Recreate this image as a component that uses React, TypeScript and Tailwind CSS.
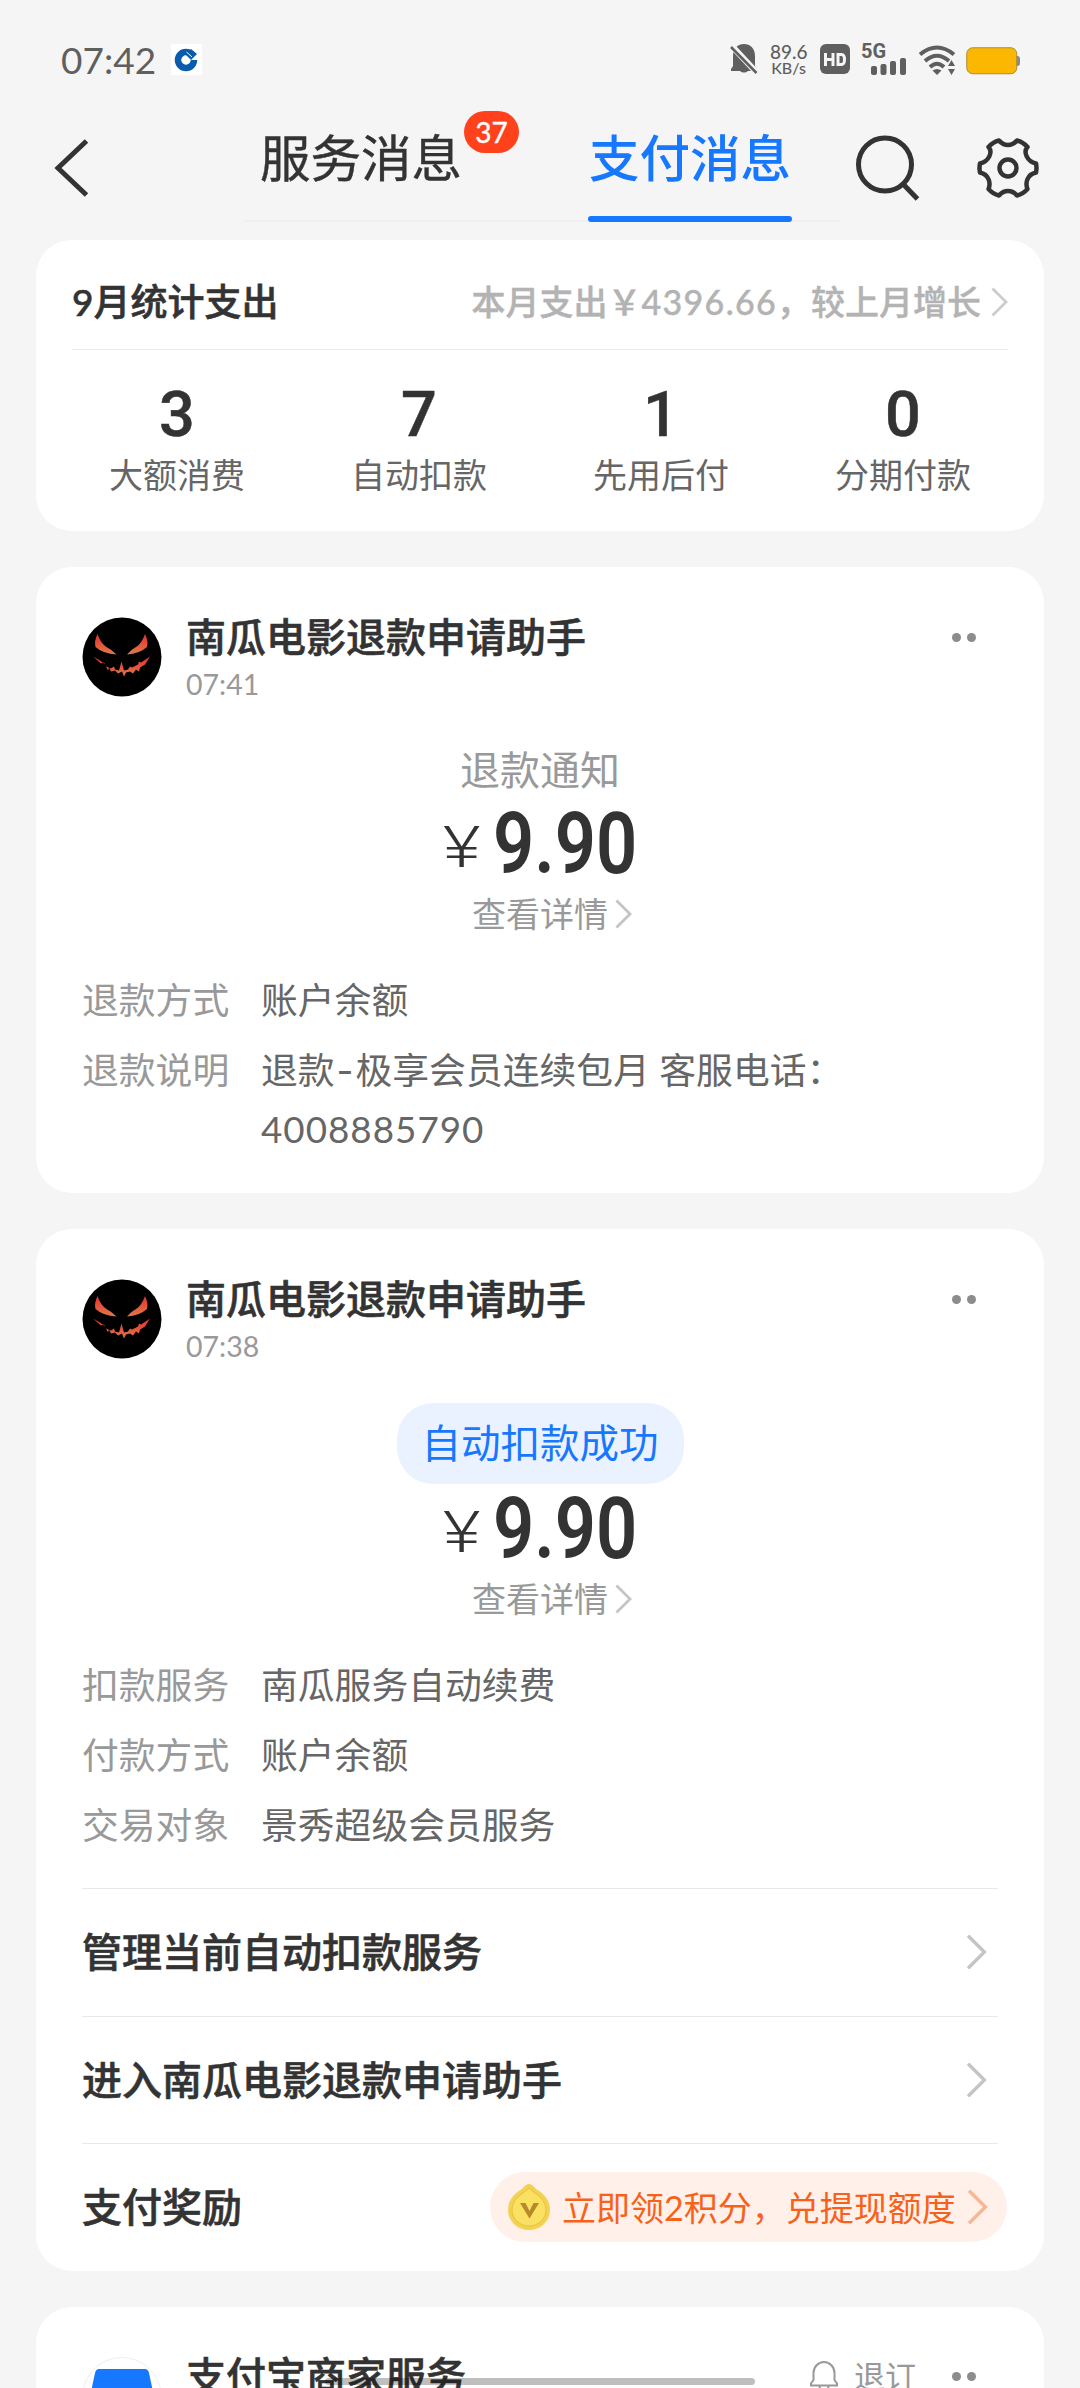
import type { ReactNode } from "react";

const stats = [
  { value: "3", label: "大额消费" },
  { value: "7", label: "自动扣款" },
  { value: "1", label: "先用后付" },
  { value: "0", label: "分期付款" },
];

const refundRows = [
  { label: "退款方式", value: "账户余额" },
  {
    label: "退款说明",
    value: (
      <>
        退款<span className="mx-[2px] font-[Inter]">-</span>极享会员连续包月 客服电话：
        <span className="tracking-[1px]">4008885790</span>
      </>
    ),
  },
];

const deductRows = [
  { label: "扣款服务", value: "南瓜服务自动续费" },
  { label: "付款方式", value: "账户余额" },
  { label: "交易对象", value: "景秀超级会员服务" },
];

function Chevron({ className }: { className: string }) {
  return (
    <svg viewBox="0 0 18 32" fill="none" stroke="currentColor" strokeWidth="3" className={className}>
      <path d="M1.5 1.5 16 16 1.5 30.5" />
    </svg>
  );
}

function StatusBar() {
  return (
    <div className="flex h-[80px] items-start pl-[61px] pr-[60px] pt-[44px] text-[#5f5f5f]">
      <span className="text-[37px] leading-[31px]">07:42</span>
      <svg viewBox="0 0 31 31" className="ml-[15px] h-[31px] w-[31px]">
        <rect width="31" height="31" fill="#fff" />
        <circle cx="15" cy="16" r="8" fill="none" stroke="#0a5bab" strokeWidth="6.5" />
        <path d="M15 16 31 5v11Z" fill="#fff" />
        <path d="m15 11 5-6 6 5-6 6Z" fill="#0a5bab" />
        <path d="m15.5 8 5.5 5" stroke="#fff" strokeWidth="1" />
        <path d="m15 11.5 4.5 4.5-4.500 4.500-4.500-4.500Z" fill="#fff" />
      </svg>

      <div className="ml-auto flex items-start">
        <svg viewBox="0 0 28 31" className="h-[31px] w-[28px]">
          <path
            d="M3 22V12C3 4 8 0 14 0s11 4 11 12v10l2 3v2H18a5 4 0 0 1-8 0H1v-2Z"
            fill="currentColor"
          />
          <path d="M0 0 28 30" stroke="#f5f5f5" strokeWidth="6" />
          <path d="M1 3 26.500 29" stroke="currentColor" strokeWidth="2.500" />
        </svg>
        <div className="ml-[12px] w-[37px] text-center font-medium">
          <div className="text-[19px] leading-[15px]">89.6</div>
          <div className="text-[16px] leading-[17px]">KB/s</div>
        </div>
        <svg viewBox="0 0 30 30" className="ml-[13px] h-[30px] w-[30px]">
          <rect width="30" height="30" rx="6" fill="currentColor" />
          <path d="M5.500 9v13M13 9v13M5.500 15.500H13M18 10.500h3.500q3 0 3 5t-3 5H18Z" fill="none" stroke="#f5f5f5" strokeWidth="3" />
        </svg>
        <div className="ml-[11px] h-[31px] w-[45px]">
          <div className="font-[Roboto] text-[20px] font-bold leading-[15px]">5G</div>
          <svg viewBox="0 0 36 17" className="-mt-[1px] ml-[10px] h-[17px] w-[36px]">
            <g fill="currentColor">
              <rect x="0" y="8" width="6" height="9" rx="2" />
              <rect x="9.500" y="6" width="6" height="11" rx="2" />
              <rect x="19" y="3" width="6" height="14" rx="2" />
              <rect x="29" y="0" width="6" height="17" rx="2" />
            </g>
          </svg>
        </div>
        <svg viewBox="0 0 37 30" className="ml-[13px] mt-[1px] h-[30px] w-[37px]">
          <g fill="none" stroke="currentColor" strokeWidth="4">
            <path d="M1 9.500Q18 -4.500 35 9.500" />
            <path d="M6 16Q18 5.500 30 16" />
            <path d="M11 22Q18 15.500 25 22" />
          </g>
          <path d="M13.500 25.500q4.500-3 9 0L18 30Z" fill="currentColor" />
          <path d="m32.500 15 3.500 6h-7ZM32.500 30l3.500-6h-7Z" fill="currentColor" />
        </svg>
        <svg viewBox="0 0 54 28" className="ml-[10px] mt-[3px] h-[28px] w-[54px]">
          <path d="M50 9h1.500q2.500 0 2.500 3v4q0 3-2.500 3H50Z" fill="#8a8a8a" />
          <rect x=".75" y=".75" width="50" height="26" rx="6" fill="#fcb800" stroke="#a98c3a" strokeWidth="1" />
        </svg>
      </div>
    </div>
  );
}

function Header() {
  return (
    <header className="flex h-[160px] items-start text-[#333]">
      <svg viewBox="0 0 36 58" className="ml-[53px] mt-[59px] h-[58px] w-[36px] shrink-0">
        <path d="M33.500 2 5 29l28.500 27" fill="none" stroke="currentColor" strokeWidth="5" />
      </svg>
      <nav className="ml-[155px] flex h-[142px] w-[596px] border-b-2 border-[#f0f0f0] pl-[14px] text-[50.500px] leading-[60px]">
        <div className="relative h-[142px] w-[206px] pt-[48px] text-center [-webkit-text-stroke:0.4px]">
          服务消息
          <span className="absolute left-[206px] top-[31px] flex h-[42px] w-[55px] items-center justify-center rounded-full bg-[#ff411c] text-[28px] text-white">
            37
          </span>
        </div>
        <div className="relative ml-[124px] h-[142px] w-[204px] pt-[48px] text-center font-medium text-[#1677ff]">
          支付消息
          <span className="absolute bottom-0 left-0 h-[6px] w-full rounded-full bg-[#1677ff]" />
        </div>
      </nav>
      <svg viewBox="0 0 66 68" className="ml-[14px] mt-[53px] h-[68px] w-[66px] shrink-0">
        <g fill="none" stroke="currentColor" strokeWidth="5">
          <circle cx="31" cy="31.500" r="26.500" />
          <path d="m50 52 13.500 14" />
        </g>
      </svg>
      <svg viewBox="0 0 62 64" className="ml-[57px] mt-[56px] h-[64px] w-[62px] shrink-0">
        <g fill="none" stroke="currentColor" strokeWidth="4.500" strokeLinejoin="round">
          <path d="M22 4.500C27 10.500 35 10.500 40 4.500Q46 6 50.500 11C46 16 50 25.500 59 27.500Q60 32 59 36.500C50 38.500 48 47 50.500 53Q46 58 40 59.500C35 53.500 27 53.500 22 59.500Q16 58 11.500 53C14 47 12 38.500 3 36.500Q2 32 3 27.500C12 25.500 16 16 11.500 11Q16 6 22 4.500Z" />
          <circle cx="31" cy="32" r="8.500" />
        </g>
      </svg>
    </header>
  );
}

function PumpkinAvatar() {
  return (
    <svg viewBox="0 0 80 80" className="-mt-px h-[80px] w-[80px] shrink-0">
      <defs>
        <linearGradient id="ember" x1="0" y1="0" x2="0" y2="1">
          <stop offset="0" stopColor="#e62e2c" />
          <stop offset="1" stopColor="#e07a48" />
        </linearGradient>
      </defs>
      <circle cx="40" cy="40" r="39.500" fill="#000" />
      <g fill="url(#ember)">
        <path d="M15.500 17Q12 24 13.500 30q8 7 21 7.500-5-5-10-7.500-6-4-9-13Z" />
        <path d="M63 17q3.500 7 2 13-8 7-20 7.500 4-5 9-7.500 6-4 9-13Z" />
        <path d="m11 39.500 8 7 3-1 2 4 5 2 3-2 1 3 4 1 2.500-9 2.500 9 4-1 2-3 2 1 6-3 1-3 2 1 9-6-5 8-5 3-1 4-3-2-3 4-3-2-4 1-2 4-2-5-4 2-3-3-4 1-2-4-1 3-3-6-5-4Z" />
      </g>
    </svg>
  );
}

function MerchantAvatar() {
  return (
    <svg viewBox="0 0 80 80" className="h-[80px] w-[80px] shrink-0">
      <circle cx="40" cy="40" r="39.500" fill="#fff" stroke="#eee" />
      <path d="M17 12h46q3 0 4 4l3 14q0 6-6 6H16q-6 0-6-6l3-14q1-4 4-4Z" fill="#1677ff" />
      <path d="M22 34q3-3 6 0t6 0 6 0 6 0 6 0 6 0" fill="none" stroke="#fff" strokeWidth="2" />
    </svg>
  );
}

function CardHeader({ avatar, title, time, action }: { avatar: ReactNode; title: string; time: string; action?: ReactNode }) {
  return (
    <div className="flex h-[80px] items-start">
      {avatar}
      <div className="ml-[24px]">
        <h2 className="text-[40px] font-medium leading-[38px] text-[#333] [-webkit-text-stroke:0.6px]">{title}</h2>
        <div className="mt-[12px] text-[28.500px] leading-[32px] text-[#999]">{time}</div>
      </div>
      <div className="ml-auto mr-[22px] flex h-[38px] items-center text-[#999]">
        {action}
        <span className="flex gap-[6px]">
          <i className="h-[9px] w-[9px] rounded-full bg-[#8c8c8c]" />
          <i className="h-[9px] w-[9px] rounded-full bg-[#8c8c8c]" />
        </span>
      </div>
    </div>
  );
}

function Amount() {
  return (
    <div className="flex h-[68px] items-center justify-center pt-[3px] leading-[68px] text-[#333]">
      <span className="mt-[6px] w-[50px] origin-left scale-x-[1.25] font-[Roboto] text-[58px] font-light">¥</span>
      <span className="w-[144px] origin-left scale-x-[0.84] whitespace-nowrap font-[Roboto] text-[86px] font-semibold">
        9.90
      </span>
    </div>
  );
}

function DetailLink() {
  return (
    <div className="mt-[18px] flex h-[40px] items-center justify-center pl-[24px] text-[34px] leading-[40px] text-[#999]">
      查看详情
      <Chevron className="ml-[7px] h-[30px] w-[17px] text-[#c4c4c4]" />
    </div>
  );
}

function InfoRows({ rows }: { rows: { label: string; value: ReactNode }[] }) {
  return (
    <dl className="mt-[37px] flex flex-col gap-[11px] text-[36.800px] leading-[59px]">
      {rows.map((row) => (
        <div key={row.label} className="flex">
          <dt className="w-[179px] shrink-0 text-[#999]">{row.label}</dt>
          <dd className="w-[620px] text-[#666]">{row.value}</dd>
        </div>
      ))}
    </dl>
  );
}

function ActionRow({ title, children }: { title: string; children: ReactNode }) {
  return (
    <div className="flex h-[127.500px] items-center justify-between border-t border-[#e8e8e8] text-[40px] font-medium text-[#333]">
      <span className="[-webkit-text-stroke:0.6px]">{title}</span>
      {children}
    </div>
  );
}

function Coin() {
  return (
    <svg viewBox="0 0 42 46" className="h-[46px] w-[42px]">
      <path d="M21 0q3 0 7 5 14 8 14 21a21 20 0 0 1-42 0Q0 13 14 5q4-5 7-5Z" fill="#f3d250" />
      <path d="M21 4q3 3 6 5 11 7 11 17a17 16 0 0 1-34 0Q4 16 15 9q3-2 6-5Z" fill="#fbe162" stroke="#e9c043" strokeWidth="1" />
      <path d="M12 19h5.500l4 8 4-8H31l-9.500 15.500Z" fill="#b8892a" />
    </svg>
  );
}

export default function App() {
  return (
    <div className="relative h-[2388px] w-[1080px] overflow-hidden bg-[#f5f5f5] font-[Lato,'Noto_Sans_CJK_SC',sans-serif]">
      <StatusBar />
      <Header />

      <main className="flex flex-col gap-[36px] px-[36px]">
        <section className="h-[291px] rounded-[36px] bg-white px-[20px]">
          <div className="mx-[16px] flex h-[110px] items-center border-b border-[#ebebeb] pt-[14px]">
            <h2 className="text-[37px] font-medium text-[#333] [-webkit-text-stroke:0.6px]">9月统计支出</h2>
            <span className="ml-auto text-[34px] font-medium text-[#b3b3b3] [-webkit-text-stroke:0.4px]">
              本月支出￥<span className="tracking-[1.300px]">4396.66</span>，较上月增长
            </span>
            <Chevron className="ml-[10px] h-[30px] w-[17px] text-[#ccc]" />
          </div>
          <div className="grid grid-cols-4 pt-[35px] text-center">
            {stats.map((stat) => (
              <div key={stat.label}>
                <div className="font-[Roboto] text-[63px] font-medium leading-[60px] text-[#333] [-webkit-text-stroke:0.5px]">
                  {stat.value}
                </div>
                <div className="mt-[10px] text-[34px] leading-[40px] text-[#666]">{stat.label}</div>
              </div>
            ))}
          </div>
        </section>

        <section className="h-[626px] rounded-[36px] bg-white px-[46px] pt-[51px]">
          <CardHeader avatar={<PumpkinAvatar />} title="南瓜电影退款申请助手" time="07:41" />
          <div className="mb-[10px] mt-[44px] text-center text-[40px] leading-[56px] text-[#999]">退款通知</div>
          <Amount />
          <DetailLink />
          <InfoRows rows={refundRows} />
        </section>

        <section className="h-[1042px] rounded-[36px] bg-white px-[46px] pt-[51px]">
          <CardHeader avatar={<PumpkinAvatar />} title="南瓜电影退款申请助手" time="07:38" />
          <div className="mx-auto mb-[9px] mt-[43px] h-[81px] w-[287px] rounded-[36px] bg-[#ebf2ff] text-center text-[39.500px] leading-[80px] text-[#1677ff]">
            自动扣款成功
          </div>
          <Amount />
          <DetailLink />
          <InfoRows rows={deductRows} />
          <div className="mt-[33px]">
            <ActionRow title="管理当前自动扣款服务">
              <Chevron className="mr-[11px] h-[36px] w-[21px] text-[#c4c4c4]" />
            </ActionRow>
            <ActionRow title="进入南瓜电影退款申请助手">
              <Chevron className="mr-[11px] h-[36px] w-[21px] text-[#c4c4c4]" />
            </ActionRow>
            <ActionRow title="支付奖励">
              <div className="-mr-[9px] flex h-[70px] w-[517px] items-center rounded-full bg-[#fff1ea] pl-[18px] text-[34px] font-normal text-[#f7611a]">
                <Coin />
                <span className="ml-[12px] whitespace-nowrap">立即领2积分，兑提现额度</span>
                <Chevron className="ml-[11px] h-[36px] w-[21px] text-[#f9b594]" />
              </div>
            </ActionRow>
          </div>
        </section>

        <section className="h-[400px] rounded-[36px] bg-white px-[46px] pt-[50px]">
          <CardHeader
            avatar={<MerchantAvatar />}
            title="支付宝商家服务"
            time="07:30"
            action={
              <span className="mr-[36px] flex items-center text-[31px]">
                <svg viewBox="0 0 28 32" className="mr-[16px] h-[32px] w-[28px]">
                  <path
                    d="M3.500 20V13a10.500 11 0 0 1 21 0v7l2.500 3.500v2H1v-2ZM9.500 26a4.500 4.500 0 0 0 9 0"
                    fill="none"
                    stroke="currentColor"
                    strokeWidth="2"
                  />
                </svg>
                退订
              </span>
            }
          />
        </section>
      </main>

      {/* system gesture bar */}
      <div className="absolute bottom-[3px] left-[325px] h-[7px] w-[430px] rounded-full bg-black/25" />
    </div>
  );
}
